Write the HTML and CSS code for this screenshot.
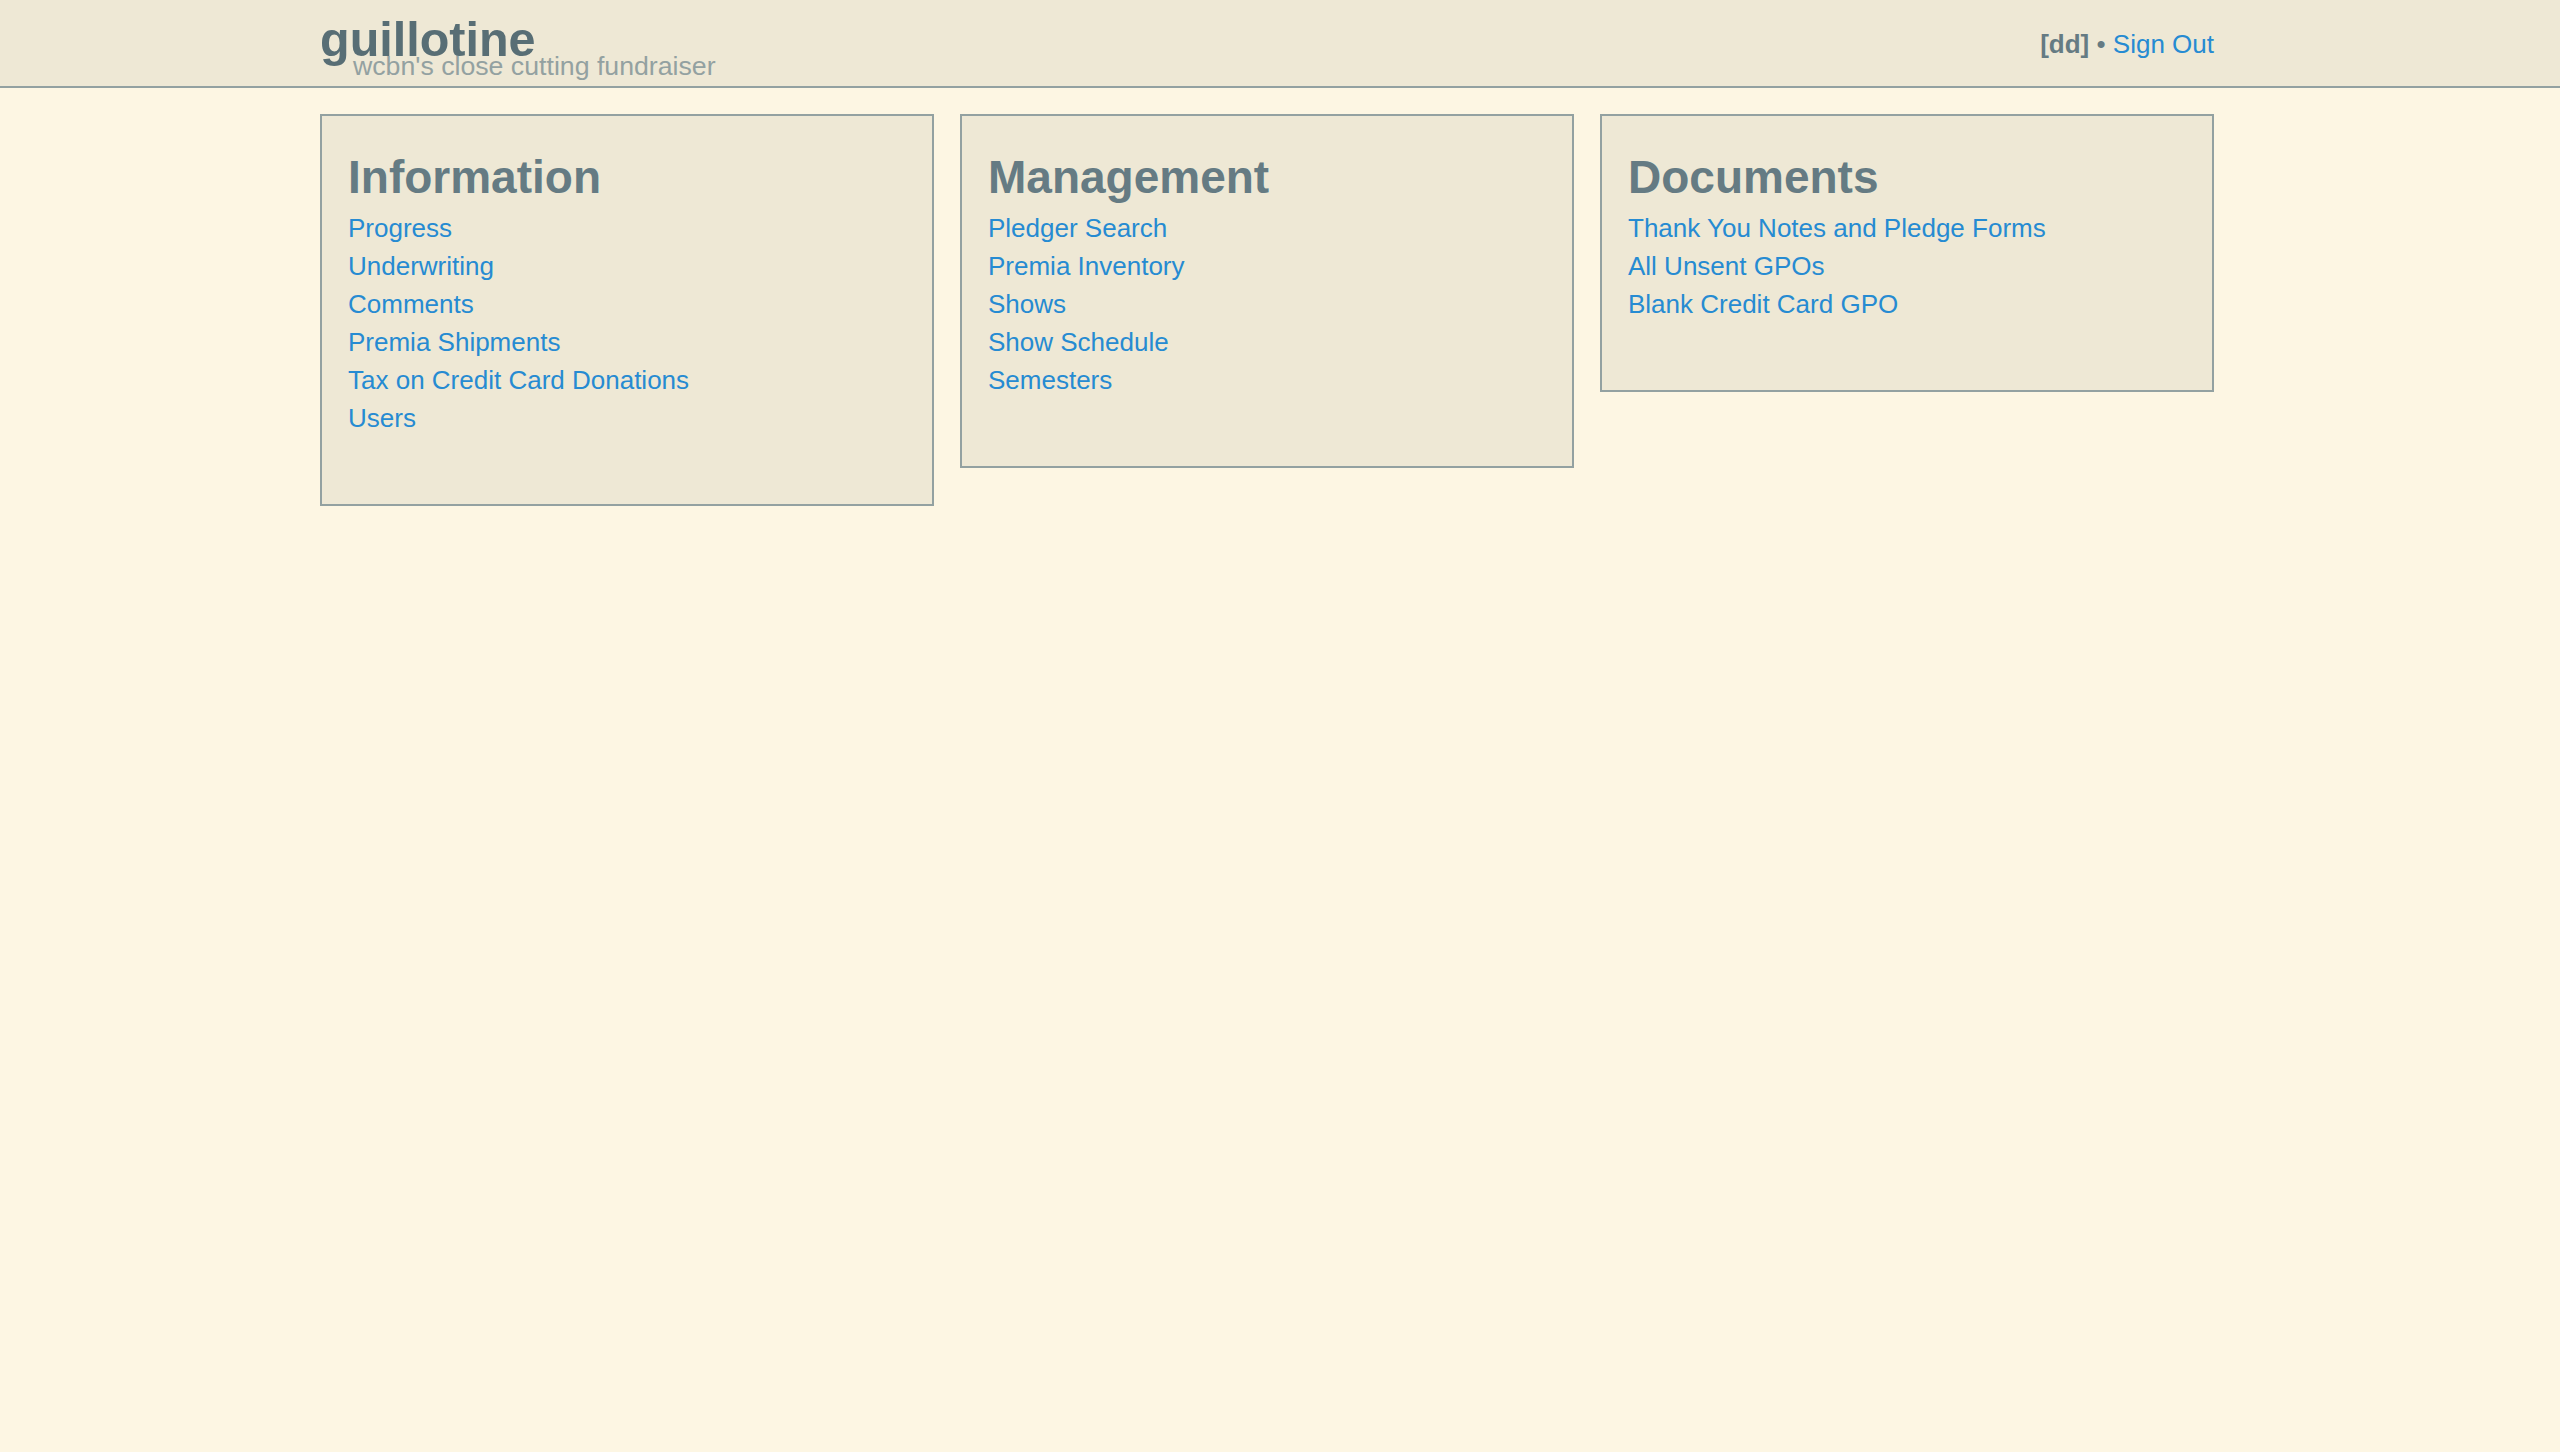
FILE: index.html
```html
<!DOCTYPE html>
<html lang="en">
<head>
<meta charset="utf-8">
<title>guillotine</title>
<link rel="stylesheet" href="styles.css">
</head>
<body>
<header class="site-header">
  <div class="container header-inner">
    <div class="brand">
      <a class="brand-title" href="#">guillotine</a>
      <div class="brand-sub">wcbn's close cutting fundraiser</div>
    </div>
    <div class="user-nav">
      <span class="user-name">[dd]</span> <span class="sep">•</span> <a href="#">Sign Out</a>
    </div>
  </div>
</header>
<main class="container panels">
  <section class="panel">
    <h2>Information</h2>
    <ul>
      <li><a href="#">Progress</a></li>
      <li><a href="#">Underwriting</a></li>
      <li><a href="#">Comments</a></li>
      <li><a href="#">Premia Shipments</a></li>
      <li><a href="#">Tax on Credit Card Donations</a></li>
      <li><a href="#">Users</a></li>
    </ul>
  </section>
  <section class="panel">
    <h2>Management</h2>
    <ul>
      <li><a href="#">Pledger Search</a></li>
      <li><a href="#">Premia Inventory</a></li>
      <li><a href="#">Shows</a></li>
      <li><a href="#">Show Schedule</a></li>
      <li><a href="#">Semesters</a></li>
    </ul>
  </section>
  <section class="panel">
    <h2>Documents</h2>
    <ul>
      <li><a href="#">Thank You Notes and Pledge Forms</a></li>
      <li><a href="#">All Unsent GPOs</a></li>
      <li><a href="#">Blank Credit Card GPO</a></li>
    </ul>
  </section>
</main>
</body>
</html>
```
FILE: styles.css
```css
html, body {
  margin: 0;
  padding: 0;
}
body {
  background: #fdf6e3;
  font-family: "Liberation Sans", Arial, Helvetica, sans-serif;
  font-size: 26px;
  line-height: 38px;
  color: #657b83;
}
a {
  color: #268bd2;
  text-decoration: none;
}
.container {
  width: 1920px;
  margin: 0 auto;
  padding-right: 26px;
  box-sizing: border-box;
}
.site-header {
  background: #eee8d5;
  border-bottom: 2px solid #93a1a1;
  height: 88px;
  box-sizing: border-box;
}
.header-inner {
  display: flex;
  justify-content: space-between;
  align-items: flex-start;
}
.brand {
  display: flex;
  flex-direction: column;
  align-items: flex-start;
  padding-top: 21px;
}
.brand-title {
  font-size: 48.5px;
  line-height: 36px;
  font-weight: bold;
  color: #586e75;
}
.brand-sub {
  font-size: 26.7px;
  line-height: 16px;
  margin-top: 1px;
  margin-left: 33px;
  color: #93a1a1;
  white-space: nowrap;
}
.user-nav {
  padding-top: 25px;
  white-space: nowrap;
}
.user-name {
  font-weight: bold;
  color: #657b83;
}
.sep {
  color: #657b83;
}
.panels {
  margin-top: 26px;
  display: grid;
  grid-template-columns: repeat(3, 1fr);
  gap: 26px;
  align-items: start;
}
.panel {
  background: #eee8d5;
  border: 2px solid #93a1a1;
  padding: 26px;
}
.panel h2 {
  margin: 9px 0 6px;
  font-size: 46px;
  line-height: 52px;
  font-weight: bold;
  color: #657b83;
}
.panel ul {
  list-style: none;
  margin: 0 0 41px;
  padding: 0;
}
.panel li {
  line-height: 38px;
}
```
